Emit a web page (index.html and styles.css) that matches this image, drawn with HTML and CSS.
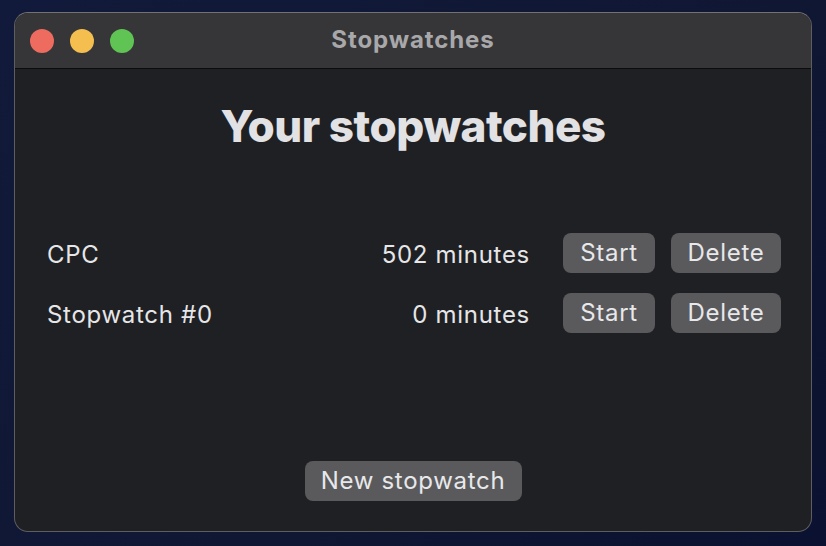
FILE: index.html
```html
<!DOCTYPE html>
<html lang="en">
<head>
<meta charset="utf-8">
<title>Stopwatches</title>
<link rel="stylesheet" href="styles.css">
</head>
<body>
<div class="window">
  <header class="titlebar">
    <div class="lights">
      <span class="light red"></span>
      <span class="light yellow"></span>
      <span class="light green"></span>
    </div>
    <div class="title">Stopwatches</div>
    <div></div>
  </header>
  <main class="content">
    <h1 class="heading">Your stopwatches</h1>
    <div class="list">
      <div class="row">
        <span class="name">CPC</span>
        <span class="minutes">502 minutes</span>
        <button class="btn btn-start">Start</button>
        <button class="btn btn-delete">Delete</button>
      </div>
      <div class="row">
        <span class="name">Stopwatch #0</span>
        <span class="minutes">0 minutes</span>
        <button class="btn btn-start">Start</button>
        <button class="btn btn-delete">Delete</button>
      </div>
    </div>
    <button class="btn btn-new">New stopwatch</button>
  </main>
</div>
</body>
</html>
```
FILE: styles.css
```css
html, body {
  margin: 0;
  height: 100%;
}
body {
  background: linear-gradient(135deg, #111a3a 0%, #0f1733 60%, #0b1130 100%);
  padding: 12px 14px 14px 14px;
  box-sizing: border-box;
  font-family: Inter, "Noto Sans", "Liberation Sans", sans-serif;
}
.window {
  width: 798px;
  height: 520px;
  box-sizing: border-box;
  border: 1px solid #5e5e60;
  border-top-color: #727274;
  border-radius: 14px;
  overflow: hidden;
  background: #1f2023;
  display: flex;
  flex-direction: column;
}
.titlebar {
  height: 55px;
  flex: none;
  background: #363638;
  border-bottom: 1px solid #0c0c0c;
  display: grid;
  grid-template-columns: 1fr auto 1fr;
  align-items: center;
}
.lights {
  display: flex;
  gap: 16px;
  padding-left: 15px;
}
.light {
  width: 24px;
  height: 24px;
  border-radius: 50%;
}
.red { background: #ee6b60; }
.yellow { background: #f5bf4f; }
.green { background: #5fc454; }
.title {
  color: #a8a8aa;
  font-size: 24px;
  font-weight: 700;
  letter-spacing: 0.9px;
  margin-top: -2px;
}
.content {
  flex: 1;
  display: flex;
  flex-direction: column;
  align-items: center;
  padding: 32px 0 30px;
}
.heading {
  margin: 0;
  font-size: 44px;
  line-height: 50px;
  font-weight: 800;
  color: #e2e2e4;
  letter-spacing: -0.5px;
}
.list {
  align-self: stretch;
  margin-top: 82px;
  display: flex;
  flex-direction: column;
  gap: 20px;
  padding: 0 30px 0 32px;
}
.row {
  display: flex;
  align-items: center;
  height: 40px;
  color: #e6e6e8;
  font-size: 24px;
  letter-spacing: 0.7px;
  padding-top: 2px;
  box-sizing: border-box;
}
.name {
  flex: 1;
}
.minutes {
  margin-right: 33px;
}
.btn {
  font-family: inherit;
  font-size: 24px;
  letter-spacing: 0.7px;
  color: #e8e8ea;
  background: #5a5a5d;
  border: none;
  border-radius: 8px;
  height: 40px;
  padding: 0;
  line-height: 38px;
}
.row .btn {
  margin-top: -2px;
}
.btn-start {
  width: 92px;
  margin-right: 16px;
}
.btn-delete {
  width: 110px;
}
.btn-new {
  margin-top: auto;
  width: 217px;
}
```
